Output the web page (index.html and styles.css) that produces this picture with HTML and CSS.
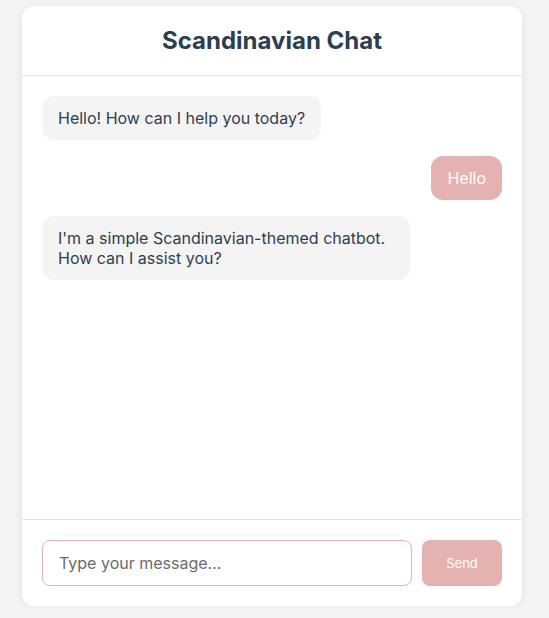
FILE: index.html
```html
<!DOCTYPE html>
<html lang="en">
<head>
<meta charset="utf-8">
<title>Scandinavian Chat</title>
<link rel="stylesheet" href="styles.css">
</head>
<body>
<div class="chat">
  <header class="chat-header">
    <h1>Scandinavian Chat</h1>
  </header>
  <main class="messages">
    <div class="msg bot">Hello! How can I help you today?</div>
    <div class="msg user">Hello</div>
    <div class="msg bot">I'm a simple Scandinavian-themed chatbot. How can I assist you?</div>
  </main>
  <footer class="composer">
    <input class="composer-input" type="text" placeholder="Type your message...">
    <button class="composer-send" type="button">Send</button>
  </footer>
</div>
</body>
</html>
```
FILE: styles.css
```css
* { box-sizing: border-box; }
html, body { margin: 0; padding: 0; }
body {
  background: #f4f4f4;
  font-family: Inter, "Noto Sans", sans-serif;
  color: #2c3e50;
  padding: 6px 0 0 22px;
}
.chat {
  width: 500px;
  height: 600px;
  background: #fff;
  border-radius: 12px;
  box-shadow: 0 2px 10px rgba(0,0,0,0.08);
  display: flex;
  flex-direction: column;
  overflow: hidden;
}
.chat-header {
  padding: 20px;
  border-bottom: 1px solid #e2e2e2;
  text-align: center;
}
.chat-header h1 {
  margin: 0;
  font-size: 24px;
  font-weight: 700;
  line-height: 29px;
  color: #2c3e50;
}
.messages {
  flex: 1;
  padding: 20px;
  display: flex;
  flex-direction: column;
  align-items: flex-start;
  gap: 16px;
}
.msg {
  max-width: 80%;
  padding: 12px 16px;
  border-radius: 12px;
  font-size: 16px;
  line-height: 20px;
}
.msg.bot {
  background: #f4f4f4;
  color: #2c3e50;
}
.msg.user {
  align-self: flex-end;
  background: #e4b2b1;
  color: #fff;
}
.composer {
  border-top: 1px solid #e2e2e2;
  padding: 20px;
  display: flex;
  gap: 10px;
}
.composer-input {
  flex: 1;
  height: 46px;
  border: 1px solid #e4b2b1;
  border-radius: 8px;
  padding: 0 16px;
  font-family: Inter, "Noto Sans", sans-serif;
  font-size: 16px;
  color: #2c3e50;
  outline: none;
}
.composer-input::placeholder { color: #6b6b6b; }
.composer-send {
  width: 80px;
  height: 46px;
  border: none;
  border-radius: 8px;
  background: #e4b2b1;
  color: #fff;
  font-family: Inter, "Noto Sans", sans-serif;
  font-size: 13px;
}
```
